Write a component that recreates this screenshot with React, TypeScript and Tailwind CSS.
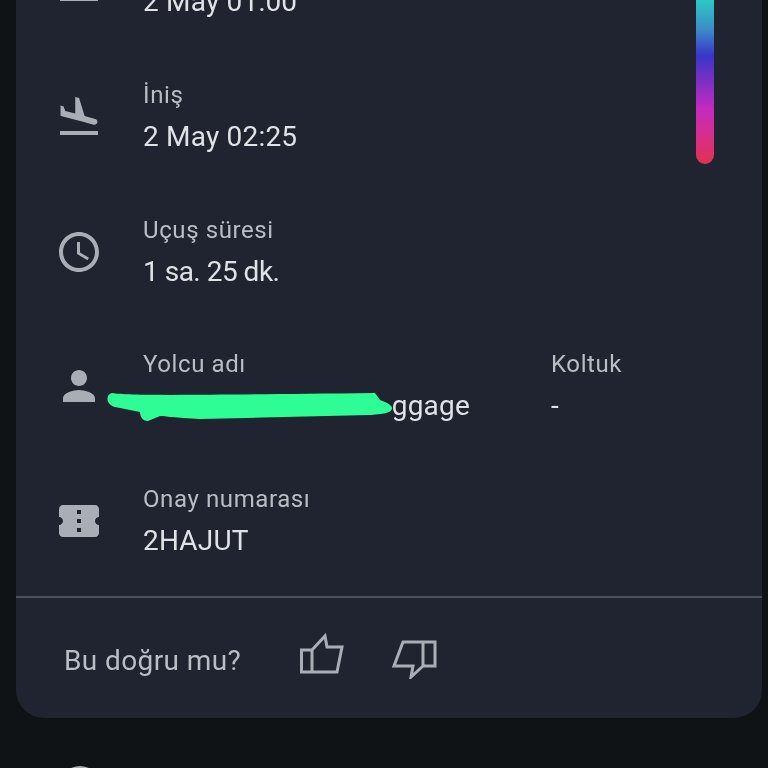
const ICONS = {
  takeoff: "M2.5 19.5h19v2h-19z",
  land: "M2.5 19h19v2h-19zm7.18-5.73 4.35 1.16 5.31 1.42c.8.21 1.62-.26 1.84-1.06.21-.8-.26-1.62-1.06-1.84l-5.31-1.42-2.76-9.02L10.12 2v8.28L5.15 8.95l-.93-2.32-1.45-.39v5.17l1.6.43 5.31 1.43z",
  clock: "M11.99 2C6.47 2 2 6.48 2 12s4.47 10 9.99 10C17.52 22 22 17.52 22 12S17.52 2 11.99 2zM12 20c-4.42 0-8-3.58-8-8s3.58-8 8-8 8 3.58 8 8-3.58 8-8 8zM12.5 7H11v6l5.25 3.15.75-1.23-4.5-2.67z",
  person: "M12 12c2.21 0 4-1.79 4-4s-1.79-4-4-4-4 1.79-4 4 1.79 4 4 4zm0 2c-2.67 0-8 1.34-8 4v2h16v-2c0-2.66-5.33-4-8-4z",
  ticket: "M22 10V6c0-1.11-.9-2-2-2H4c-1.1 0-1.99.89-1.99 2v4c1.1 0 1.99.9 1.99 2s-.89 2-2 2v4c0 1.1.9 2 2 2h16c1.1 0 2-.9 2-2v-4c-1.1 0-2-.9-2-2s.9-2 2-2zm-9 7.5h-2v-2h2v2zm0-4.5h-2v-2h2v2zm0-4.5h-2v-2h2v2z",
};

function Icon({ d }: { d: string }) {
  return (
    <svg viewBox="0 0 24 24" className="w-12 h-12 mt-[4px] shrink-0 fill-[#a9aeb6]">
      <path d={d} />
    </svg>
  );
}

function Label({ children }: { children?: React.ReactNode }) {
  return <div className="h-[32px] text-[24px] leading-[32px] text-[#b9bec5] tracking-[0.6px]">{children}</div>;
}

function Value({ children, narrow }: { children: React.ReactNode; narrow?: boolean }) {
  return (
    <div className={narrow ? "mt-[10px] text-[28px] leading-[32px] text-[#dfe2e6] tracking-[-0.5px]" : "mt-[10px] text-[28px] leading-[32px] text-[#dfe2e6] tracking-[0.2px]"}>
      {children}
    </div>
  );
}

function Row({ icon, label, value, narrow }: { icon: string; label?: string; value: string; narrow?: boolean }) {
  return (
    <div className="h-[134.7px] flex items-center">
      <div className="w-[127px] pl-[39px] shrink-0">
        <Icon d={icon} />
      </div>
      <div className="mt-[2px]">
        <Label>{label}</Label>
        <Value narrow={narrow}>{value}</Value>
      </div>
    </div>
  );
}

export default function App() {
  return (
    <div className="h-[768px] overflow-hidden bg-[#0f1316] font-['Roboto',sans-serif] blur-[0.6px]">
      <div className="relative ml-4 mr-1.5 mt-[-87px] bg-[#1f2430] rounded-b-[28px] overflow-hidden">
        <div className="absolute right-[48px] top-0 h-[251px] w-[18px] rounded-b-[9px] bg-[linear-gradient(to_bottom,#22d3a8_0%,#2cc6c4_35%,#3b8ec8_46%,#3a35c8_57%,#c42abf_78%,#d92f86_90%,#e0324f_100%)]" />
        <Row icon={ICONS.takeoff} value="2 May 01:00" />
        <Row icon={ICONS.land} label="İniş" value="2 May 02:25" />
        <Row icon={ICONS.clock} label="Uçuş süresi" value="1 sa. 25 dk." narrow />
        <div className="relative h-[134.7px] flex items-center">
          <div className="w-[127px] pl-[39px] shrink-0">
            <Icon d={ICONS.person} />
          </div>
          <div className="w-[408px] shrink-0 mt-[2px]">
            <Label>Yolcu adı</Label>
            <div className="w-[327px] text-right">
              <Value>ggage</Value>
            </div>
          </div>
          <div className="mt-[2px]">
            <Label>Koltuk</Label>
            <Value>-</Value>
          </div>
          <svg viewBox="0 0 300 40" className="absolute left-[90px] top-[74px] w-[300px] h-[40px] fill-[#2efc95]">
            <path d="M6 2C24 5 94 4 269 2L274 9C282 12 287 15 286 18C284 23 274 23 264 24L94 28C69 27 59 25 54 25L42 30C36 30 34 25 34 21L9 16C-1 13 0 3 6 2Z" />
          </svg>
        </div>
        <Row icon={ICONS.ticket} label="Onay numarası" value="2HAJUT" />
        <div className="h-[10px]" />
        <div className="h-[2px] bg-[#4b525d]" />
        <div className="h-[120px] pl-[48px] flex items-center">
          <span className="w-[234px] mt-[6px] text-[28px] tracking-[0.4px] text-[#b9bec5]">Bu doğru mu?</span>
          <svg viewBox="0 0 48 48" className="w-12 h-12 mt-[-6px] fill-none stroke-[#a9aeb6] stroke-[3px]">
            <path d="M3.5 19H14V41H3.5ZM14 19L27 5L29 16H44L39 41H14" />
          </svg>
          <svg viewBox="0 0 48 48" className="ml-[44px] w-12 h-12 mt-[-6px] fill-none stroke-[#a9aeb6] stroke-[3px]">
            <path d="M45 11H33V35H45ZM33 11H13L4 35H23L21 46L33 35" />
          </svg>
        </div>
      </div>
      <div className="ml-[60px] mt-[48px] w-[40px] h-[40px] rounded-full bg-[#a9aeb6]" />
    </div>
  );
}
